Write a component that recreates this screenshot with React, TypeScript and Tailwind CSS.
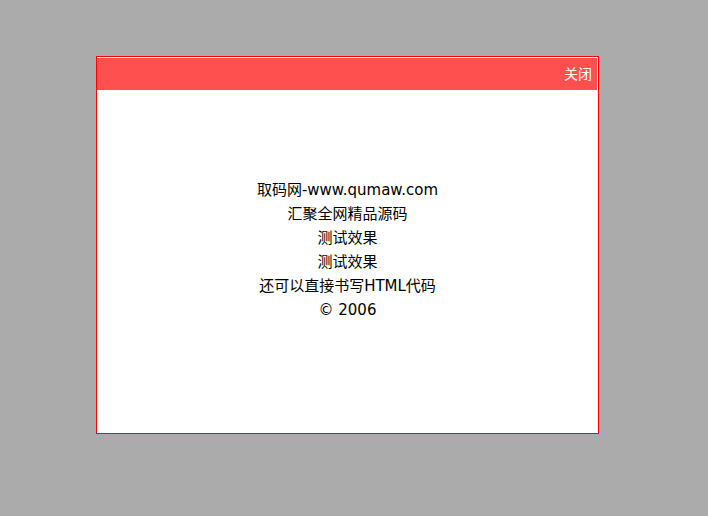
export default function App() {
  const lines = [
    "取码网-www.qumaw.com",
    "汇聚全网精品源码",
    "测试效果",
    "测试效果",
    "还可以直接书写HTML代码",
    "© 2006",
  ];

  return (
    <div
      className="min-h-[516px] w-full bg-[#ababab] pl-[96px] pt-[56px]"
      style={{ fontFamily: '"DejaVu Sans", "Noto Sans CJK SC", sans-serif' }}
    >
      <div className="h-[378px] w-[503px] border border-[#ff0000] bg-white">
        <div className="mt-px flex h-8 w-[500px] items-center justify-end bg-[#ff5050] pr-[5px] text-[14px] text-white">
          <span className="cursor-pointer">关闭</span>
        </div>
        <div className="pt-[88px] text-center text-[15px] leading-6 text-black">
          {lines.map((line, i) => (
            <div key={i}>{line}</div>
          ))}
        </div>
      </div>
    </div>
  );
}
